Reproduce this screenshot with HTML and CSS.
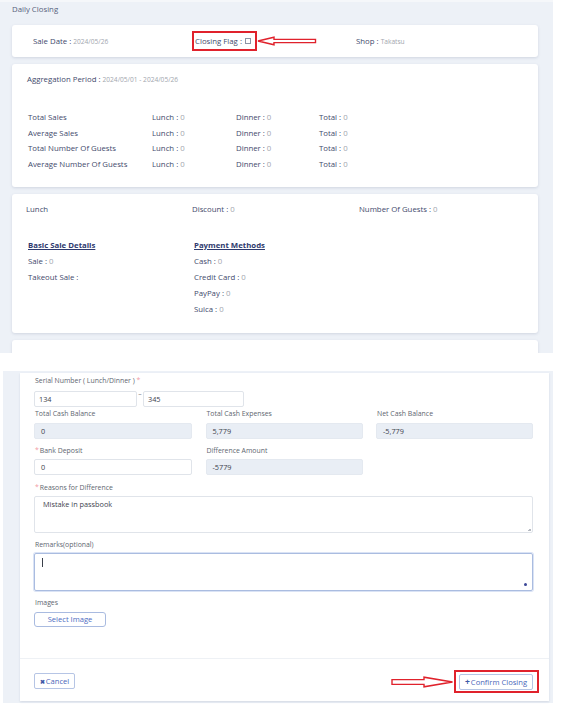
FILE: index.html
```html
<!DOCTYPE html>
<html lang="en">
<head>
<meta charset="utf-8">
<title>Daily Closing</title>
<link rel="stylesheet" href="styles.css">
</head>
<body>
<section class="top">
  <div class="page-title">Daily Closing</div>

  <div class="card card-head">
    <div class="kv"><span class="k">Sale Date :</span> <span class="v sm">2024/05/26</span></div>
    <div class="kv flag">
      <span class="k">Closing Flag :</span> <span class="checkbox"></span>
      <span class="mark-box"></span>
      <svg class="arrow-left" width="60" height="10" viewBox="0 0 60 10"><path d="M1 5 L17 1.2 L17 3.4 L58.5 3.4 L58.5 6.6 L17 6.6 L17 8.8 Z" fill="#fff" stroke="#e0222c" stroke-width="1.4" stroke-linejoin="miter"/></svg>
    </div>
    <div class="kv"><span class="k">Shop :</span> <span class="v sm">Takatsu</span></div>
  </div>

  <div class="card card-agg">
    <div class="agg"><span class="k">Aggregation Period :</span> <span class="v sm">2024/05/01 - 2024/05/26</span></div>
    <div class="stats">
      <span class="k">Total Sales</span><span><span class="k">Lunch :</span> <span class="v">0</span></span><span><span class="k">Dinner :</span> <span class="v">0</span></span><span><span class="k">Total :</span> <span class="v">0</span></span>
      <span class="k">Average Sales</span><span><span class="k">Lunch :</span> <span class="v">0</span></span><span><span class="k">Dinner :</span> <span class="v">0</span></span><span><span class="k">Total :</span> <span class="v">0</span></span>
      <span class="k">Total Number Of Guests</span><span><span class="k">Lunch :</span> <span class="v">0</span></span><span><span class="k">Dinner :</span> <span class="v">0</span></span><span><span class="k">Total :</span> <span class="v">0</span></span>
      <span class="k">Average Number Of Guests</span><span><span class="k">Lunch :</span> <span class="v">0</span></span><span><span class="k">Dinner :</span> <span class="v">0</span></span><span><span class="k">Total :</span> <span class="v">0</span></span>
    </div>
  </div>

  <div class="card card-meal">
    <div class="meal-head">
      <span class="k">Lunch</span>
      <span><span class="k">Discount :</span> <span class="v">0</span></span>
      <span><span class="k">Number Of Guests :</span> <span class="v">0</span></span>
    </div>
    <div class="meal-body">
      <div class="col">
        <div class="sec-title">Basic Sale Details</div>
        <div><span class="k">Sale :</span> <span class="v">0</span></div>
        <div><span class="k">Takeout Sale :</span></div>
      </div>
      <div class="col">
        <div class="sec-title">Payment Methods</div>
        <div><span class="k">Cash :</span> <span class="v">0</span></div>
        <div><span class="k">Credit Card :</span> <span class="v">0</span></div>
        <div><span class="k">PayPay :</span> <span class="v">0</span></div>
        <div><span class="k">Suica :</span> <span class="v">0</span></div>
      </div>
    </div>
  </div>

  <div class="card card-meal">
    <div class="meal-head">
      <span class="k">Dinner</span>
      <span><span class="k">Discount :</span> <span class="v">0</span></span>
      <span><span class="k">Number Of Guests :</span> <span class="v">0</span></span>
    </div>
  </div>
</section>

<section class="bottom">
  <div class="form-card">
    <div class="form-body">
      <div class="row row-serial">
        <div class="label">Serial Number ( Lunch/Dinner ) <span class="req">*</span></div>
        <div class="serial">
          <div class="field w1">134</div>
          <span class="tilde">~</span>
          <div class="field w2">345</div>
        </div>
      </div>

      <div class="row row-grid r2">
        <div class="group">
          <div class="label">Total Cash Balance</div>
          <div class="field ro">0</div>
        </div>
        <div class="group">
          <div class="label">Total Cash Expenses</div>
          <div class="field ro">5,779</div>
        </div>
        <div class="group">
          <div class="label">Net Cash Balance</div>
          <div class="field ro">-5,779</div>
        </div>
      </div>

      <div class="row row-grid r3">
        <div class="group">
          <div class="label"><span class="req">*</span>Bank Deposit</div>
          <div class="field">0</div>
        </div>
        <div class="group">
          <div class="label">Difference Amount</div>
          <div class="field ro">-5779</div>
        </div>
      </div>

      <div class="row r4">
        <div class="label"><span class="req">*</span>Reasons for Difference</div>
        <div class="textarea ta-reason">Mistake in passbook<span class="grip"></span></div>
      </div>

      <div class="row r5">
        <div class="label">Remarks(optional)</div>
        <div class="textarea ta-remarks"><span class="caret"></span><span class="dot"></span></div>
      </div>

      <div class="row r6">
        <div class="label">Images</div>
        <div class="btn-select">Select Image</div>
      </div>
    </div>

    <div class="form-footer">
      <div class="btn btn-cancel"><span class="ico">✖</span>Cancel</div>
      <div class="confirm-wrap">
        <svg class="arrow-right" width="63" height="12" viewBox="0 0 63 12"><path d="M1 3.6 L33 3.6 L33 1.2 L61.5 6 L33 10.8 L33 8.4 L1 8.4 Z" fill="#fff" stroke="#e0222c" stroke-width="1.4"/></svg>
        <span class="mark-box2"></span>
        <div class="btn btn-confirm"><span class="ico">+</span>Confirm Closing</div>
      </div>
    </div>
  </div>
</section>
</body>
</html>
```

FILE: styles.css
```css
html, body {
  margin: 0;
  padding: 0;
  background: #ffffff;
}

body {
  font-family: "Open Sans", "Noto Sans", sans-serif;
  width: 566px;
  height: 720px;
  overflow: hidden;
}

.k { color: #3f4a6c; }
.v { color: #a2a6ae; }
.sm { font-size: 6.6px; }

/* ---------- top screenshot ---------- */
.top {
  width: 553px;
  height: 353px;
  overflow: hidden;
  background: #edf1f7;
  box-sizing: border-box;
  padding: 4px 15px 0 12px;
  border-top: 2px solid #f5f7fa;
  font-size: 7.8px;
}

.page-title {
  color: #57617b;
  line-height: 10px;
  height: 10px;
  margin-top: -2px;
  margin-bottom: 11px;
}

.card {
  background: #ffffff;
  border-radius: 3px;
  box-shadow: 0 1px 3px rgba(60, 72, 110, 0.16);
}

.card + .card { margin-top: 7px; }

.card-head {
  height: 32px;
  display: grid;
  grid-template-columns: 162px 161px 1fr;
  align-items: center;
  padding-left: 21px;
  box-sizing: border-box;
}

.kv { white-space: nowrap; }

.flag { position: relative; }

.checkbox {
  display: inline-block;
  width: 4px;
  height: 4px;
  border: 0.8px solid #8d95a5;
  vertical-align: 0.5px;
  margin-left: 1px;
}

.mark-box {
  position: absolute;
  left: -3px;
  top: 50%;
  margin-top: -10px;
  width: 65px;
  height: 20px;
  box-sizing: border-box;
  border: 2px solid #e0222c;
}

.arrow-left {
  position: absolute;
  left: 62px;
  top: 50%;
  margin-top: -5px;
}

.card-agg {
  height: 123px;
  box-sizing: border-box;
  padding: 10px 0 0 15px;
}

.agg { line-height: 10px; white-space: nowrap; }

.stats {
  margin-top: 24px;
  padding-left: 1px;
  display: grid;
  grid-template-columns: 124px 84px 83px 1fr;
  grid-auto-rows: 15.7px;
  align-items: center;
  white-space: nowrap;
}

.card-meal {
  height: 139px;
  box-sizing: border-box;
  padding: 10px 0 0 14px;
}

.meal-head {
  display: grid;
  grid-template-columns: 166px 167px 1fr;
  line-height: 10px;
  white-space: nowrap;
}

.meal-body {
  margin-top: 23px;
  padding-left: 2px;
  display: grid;
  grid-template-columns: 166px 1fr;
}

.col > div {
  height: 16px;
  line-height: 16px;
  white-space: nowrap;
}

.sec-title {
  color: #2e3a6e;
  font-weight: 700;
  text-decoration: underline;
  text-underline-offset: 1px;
}

/* ---------- bottom screenshot ---------- */
.bottom {
  margin: 18px 0 0 3px;
  width: 550px;
  background: #edf1f7;
  box-sizing: border-box;
  padding: 2px 4px 2px 17px;
}

.form-card {
  background: #ffffff;
  box-shadow: 0 1px 2px rgba(60, 72, 110, 0.14);
}

.form-body {
  padding: 4px 16px 31px 14px;
}

.label {
  font-size: 6.9px;
  line-height: 8px;
  height: 8px;
  color: #60666f;
  padding-left: 1px;
  white-space: nowrap;
}

.req {
  color: #f29aa5;
  margin-right: 1px;
}

.field {
  height: 16px;
  box-sizing: border-box;
  border: 1px solid #e0e4ea;
  border-radius: 2px;
  font-size: 7.3px;
  line-height: 14px;
  padding: 0 6px;
  color: #3d424d;
  background: #ffffff;
}

.field.ro {
  background: #e9eef5;
  border-color: #e4e9f0;
}

.row-serial .label { margin-bottom: 6px; }

.serial {
  display: flex;
  align-items: flex-start;
}

.w1 { width: 103px; padding-left: 4px; }
.w2 { width: 101px; padding-left: 4px; }

.tilde {
  width: 6px;
  font-size: 6px;
  line-height: 6px;
  color: #777;
  text-align: center;
}

.row-grid {
  display: grid;
  grid-template-columns: 158px 157px 157px;
  column-gap: 13.5px;
}

.r2 { margin-top: 3px; }
.r2 .label { margin-bottom: 5px; }
.r3 { margin-top: 8px; }
.r3 .label { margin-bottom: 4px; }
.r4 { margin-top: 9px; }
.r4 .label { margin-bottom: 4px; }
.r5 { margin-top: 8px; }
.r5 .label { margin-bottom: 4px; }
.r6 { margin-top: 8px; }
.r6 .label { margin-bottom: 5px; }

.textarea {
  position: relative;
  box-sizing: border-box;
  border: 1px solid #e0e4ea;
  border-radius: 2px;
  font-size: 7.3px;
  line-height: 9px;
  color: #3d424d;
  padding: 3px 8px;
}

.ta-reason { height: 37px; }

.grip {
  position: absolute;
  right: 1px;
  bottom: 1px;
  width: 3px;
  height: 3px;
  background: linear-gradient(135deg, transparent 50%, #b6bac2 50%);
}

.ta-remarks {
  height: 38px;
  border-color: #aabce0;
  box-shadow: 0 0 0 1px rgba(150, 175, 225, 0.35);
}

.caret {
  position: absolute;
  left: 7px;
  top: 4px;
  width: 1px;
  height: 9px;
  background: #3a3f4a;
}

.dot {
  position: absolute;
  right: 5px;
  bottom: 4px;
  width: 3px;
  height: 3px;
  border-radius: 50%;
  background: #3b4797;
}

.btn-select {
  width: 72px;
  height: 15px;
  box-sizing: border-box;
  border: 1px solid #a9bbe0;
  border-radius: 3px;
  font-size: 7.6px;
  line-height: 13px;
  text-align: center;
  color: #4e6cc2;
}

.form-footer {
  height: 43px;
  box-sizing: border-box;
  border-top: 1px solid #eef1f5;
  display: flex;
  justify-content: space-between;
  align-items: flex-start;
  padding: 14px 16px 0 14px;
}

.btn {
  height: 16px;
  box-sizing: border-box;
  border: 1px solid #b6c5e5;
  border-radius: 2px;
  font-size: 7.6px;
  line-height: 14px;
  color: #4a66b8;
  text-align: center;
  white-space: nowrap;
}

.btn .ico {
  font-weight: 700;
  color: #3e58a6;
  margin-right: 1px;
}

.btn-cancel { width: 41px; }
.btn-cancel .ico { font-size: 5.5px; vertical-align: 0.5px; }

.confirm-wrap {
  position: relative;
  margin-top: 1px;
}

.btn-confirm { width: 74px; }
.btn-confirm .ico { font-size: 8.5px; }

.mark-box2 {
  position: absolute;
  left: -5px;
  top: -4px;
  right: -6px;
  bottom: -3px;
  border: 2px solid #e0222c;
}

.arrow-right {
  position: absolute;
  left: -68px;
  top: 50%;
  margin-top: -6px;
}
```
